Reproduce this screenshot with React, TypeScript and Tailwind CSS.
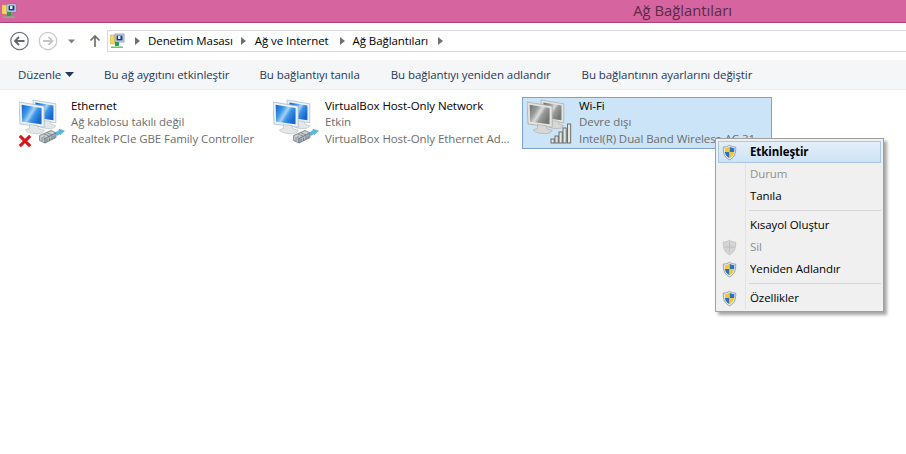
import React from 'react';

const font = { fontFamily: '"Open Sans", "Noto Sans", sans-serif' };

function FolderIcon({ size = 16 }: { size?: number }) {
  return (
    <svg width={size} height={size} viewBox="0 0 16 16" className="shrink-0">
      <path d="M0 2h5l1 1h3v8H0z" fill="#f4d662" stroke="#c9a83c" strokeWidth="0.5" />
      <rect x="5" y="1" width="9" height="8" fill="#dbe6f2" stroke="#6d7f93" strokeWidth="0.7" />
      <rect x="6.5" y="2.5" width="6" height="5" fill="#10388f" />
      <rect x="8" y="3" width="2.5" height="3" fill="#dfeaf8" />
      <rect x="5" y="9" width="4" height="4" fill="#2d9e4f" />
      <rect x="1" y="13.5" width="12" height="1.5" fill="#5fc77a" />
    </svg>
  );
}

function Monitor({ gray, x, y, scale = 1 }: { gray?: boolean; x: number; y: number; scale?: number }) {
  const id = gray ? 'screen-gray' : 'screen-blue';
  return (
    <g transform={`translate(${x} ${y}) scale(${scale})`}>
      <path d="M0 0l24 4v20L1 21z" fill={gray ? '#e4e4e2' : '#eef3f8'} stroke={gray ? '#a3a5a2' : '#9db4cc'} strokeWidth="0.7" />
      <path d="M2.500 2.500l19 3.200v15.500L3 18.800z" fill={`url(#${id})`} />
      <path d="M10 21.500l8 1 1 3 5 1.500c-1 2.500-4 3.500-9 3-5-.3-8-1.500-9-3.500l4-1.500z" fill={gray ? '#d7d7d4' : '#e4e7e8'} stroke={gray ? '#a9aaa7' : '#b5babd'} strokeWidth="0.6" />
    </g>
  );
}

function Computers({ gray }: { gray?: boolean }) {
  return (
    <svg width="38" height="36" viewBox="0 0 38 36" className="absolute left-0 top-0">
      <defs>
        <linearGradient id="screen-blue" x1="0" y1="0" x2="1" y2="0.6">
          <stop offset="0" stopColor="#0f5fc4" />
          <stop offset="0.35" stopColor="#3f97e8" />
          <stop offset="0.55" stopColor="#a4d3f6" />
          <stop offset="0.7" stopColor="#3e94e6" />
          <stop offset="1" stopColor="#1668cc" />
        </linearGradient>
        <linearGradient id="screen-gray" x1="0" y1="0" x2="1" y2="0.6">
          <stop offset="0" stopColor="#6f716e" />
          <stop offset="0.35" stopColor="#9a9c99" />
          <stop offset="0.55" stopColor="#dcdcda" />
          <stop offset="0.7" stopColor="#999b98" />
          <stop offset="1" stopColor="#757774" />
        </linearGradient>
      </defs>
      <Monitor gray={gray} x={14} y={1} scale={0.95} />
      <Monitor gray={gray} x={0} y={3} scale={1.05} />
    </svg>
  );
}

function Plug() {
  return (
    <svg width="26" height="15" viewBox="0 0 26 15" className="absolute left-[20px] top-[30px]">
      <path d="M.6 6.500L12 1.500l5 2.500L6 9.500v4.500L.6 11.500z" fill="#cdd3d7" stroke="#66747c" strokeWidth="0.8" />
      <path d="M6 9.500v4.500L17 8.500V4z" fill="#aeb7bd" stroke="#66747c" strokeWidth="0.8" />
      <path d="M3 8l0 4M5 6.700l0 4M8 10l0 3M10.500 9l0 3M13 7.500l0 3M15 6.500l0 3M5 5l5 2M8 3.800l5 2" stroke="#5f6c74" strokeWidth="0.7" />
      <path d="M16 4l4-2.500V0l5.500 2L21 6V4.500l-3 2z" fill="#5cb6df" stroke="#3b91b9" strokeWidth="0.4" />
    </svg>
  );
}

function RedX() {
  return (
    <svg width="14" height="14" viewBox="0 0 14 14" className="absolute left-[-1px] top-[35px]">
      <path d="M1.800 1.800l10.400 10.400M12.200 1.800L1.800 12.200" stroke="#d5161c" strokeWidth="3.100" />
    </svg>
  );
}

function Signal() {
  return (
    <svg width="25" height="22" viewBox="0 0 25 22" className="absolute left-[23px] top-[24px]">
      {[
        [1, 16, 4],
        [5, 13, 7],
        [9, 9, 11],
        [13, 5, 15],
        [17.500, 1, 19],
      ].map(([x, y, h]) => (
        <rect key={x} x={x} y={y} width="3.200" height={h} fill="#e4e6e2" stroke="#5f635c" strokeWidth="0.9" />
      ))}
    </svg>
  );
}

function Shield({ gray }: { gray?: boolean }) {
  return (
    <svg width="15" height="17" viewBox="0 0 16 17">
      <path d="M8 .7c2 1.400 4 2 6.600 2 .3 6.500-1.300 11.200-6.600 13.600C2.700 13.900 1.100 9.200 1.400 2.700 4 2.700 6 2.100 8 .700z" fill={gray ? '#d4d4d4' : '#e9eef3'} stroke={gray ? '#bcbcbc' : '#7a8a9c'} strokeWidth="0.8" />
      {gray ? (
        <path d="M8 3v11M3 8h10" stroke="#bdbdbd" strokeWidth="1" />
      ) : (
        <>
          <path d="M8 2.400c1.700 1 3.300 1.500 5.200 1.600L13 8H8z" fill="#2d6fc4" />
          <path d="M8 2.400C6.300 3.400 4.700 3.900 2.800 4L3 8h5z" fill="#f4c92f" />
          <path d="M3 8h5v6.700C5 13.200 3.500 11 3 8z" fill="#2d6fc4" />
          <path d="M13 8H8v6.700c3-1.500 4.500-3.700 5-6.700z" fill="#f4c92f" />
        </>
      )}
    </svg>
  );
}

function Adapter({
  name,
  status,
  device,
  selected,
  className,
  children,
}: {
  name: string;
  status: string;
  device: string;
  selected?: boolean;
  className: string;
  children: React.ReactNode;
}) {
  return (
    <div
      className={`flex h-[52px] shrink-0 items-start border pl-[4px] pt-[1px] ${className} ${
        selected ? 'border-[#7da2ce] bg-[#cce4f8]' : 'border-transparent'
      }`}
    >
      <div className="relative h-[50px] w-[52px] shrink-0">{children}</div>
      <div className="-mt-px whitespace-nowrap text-[11.5px] leading-[16px] tracking-[-0.08px]">
        <div className="text-black">{name}</div>
        <div className="text-[#6d6d6d]">{status}</div>
        <div className="mt-px text-[#6d6d6d]">{device}</div>
      </div>
    </div>
  );
}

function MenuItem({ label, shield, disabled, bold }: { label: string; shield?: 'color' | 'gray'; disabled?: boolean; bold?: boolean }) {
  return (
    <div
      className={`flex h-[22px] items-center border ${
        bold ? 'border-[#a8c8e6] bg-gradient-to-b from-[#e3eff9] to-[#cfe3f5]' : 'border-transparent'
      }`}
    >
      <div className="flex w-[21px] shrink-0 justify-center">{shield && <Shield gray={shield === 'gray'} />}</div>
      <span
        className={`pl-[10px] text-[11.5px] tracking-[-0.08px] ${
          bold ? 'font-bold text-black' : disabled ? 'text-[#8f8f8f]' : 'text-black'
        }`}
      >
        {label}
      </span>
    </div>
  );
}

function Arrow({ className }: { className: string }) {
  return (
    <svg width="5" height="8" viewBox="0 0 5 8" className={`shrink-0 ${className}`}>
      <path d="M0 0l5 4-5 4z" fill="#707070" />
    </svg>
  );
}

export default function App() {
  return (
    <div className="relative h-[454px] w-[906px] overflow-hidden bg-white" style={font}>
      {/* Title bar */}
      <div className="relative flex h-[23px] items-center justify-end border-b border-[#a8447c] bg-[#d6649f] pb-[2px]">
        <div className="absolute left-[2px] top-[3px]">
          <FolderIcon />
        </div>
        <span className="mr-[174px] text-[14.8px] text-[#5b2a45]">Ağ Bağlantıları</span>
      </div>

      {/* Navigation row */}
      <div className="flex h-[37px] items-start pl-[10px] pt-[8px]">
        <svg width="72" height="20" viewBox="0 0 72 20" className="mr-[7px] shrink-0" fill="none">
          <circle cx="9.500" cy="10" r="8.700" stroke="#6e7378" strokeWidth="1.200" />
          <path d="M14.500 10h-9M9 6l-4 4 4 4" stroke="#60656a" strokeWidth="1.800" />
          <circle cx="38" cy="10" r="8.700" stroke="#c6c8ca" strokeWidth="1.200" />
          <path d="M33 10h9M38.500 6l4 4-4 4" stroke="#c3c5c7" strokeWidth="1.800" />
          <path d="M58 8.500h7L61.500 12.500z" fill="#7d8184" />
        </svg>
        <svg width="12" height="14" viewBox="0 0 12 14" className="mr-[7px] mt-[3px] shrink-0" fill="none">
          <path d="M6 13V2M1.500 6.500L6 2l4.500 4.500" stroke="#6c7074" strokeWidth="1.700" />
        </svg>
        <div className="-ml-px -mt-px flex h-[22px] flex-1 items-center border border-r-0 border-[#d9d9d9] pl-[2px] text-[11.5px] tracking-[-0.08px] text-black">
          <FolderIcon />
          <Arrow className="ml-[9px]" />
          <span className="ml-[8px]">Denetim Masası</span>
          <Arrow className="ml-[8px]" />
          <span className="ml-[9px]">Ağ ve Internet</span>
          <Arrow className="ml-[11px]" />
          <span className="ml-[8px]">Ağ Bağlantıları</span>
          <Arrow className="ml-[10px]" />
        </div>
      </div>

      {/* Command bar */}
      <div className="flex h-[30px] items-center border-b border-[#eaecef] bg-[#f5f6f7] pl-[18px] text-[11.5px] tracking-[-0.08px] text-[#1e395b]">
        <span>Düzenle</span>
        <svg width="9" height="5" viewBox="0 0 9 5" className="ml-[4px] mr-[30px]">
          <path d="M0 0h9L4.500 5z" fill="#1e395b" />
        </svg>
        <span className="mr-[30px]">Bu ağ aygıtını etkinleştir</span>
        <span className="mr-[31px]">Bu bağlantıyı tanıla</span>
        <span className="mr-[31px]">Bu bağlantıyı yeniden adlandır</span>
        <span>Bu bağlantının ayarlarını değiştir</span>
      </div>

      {/* Adapters */}
      <div className="flex pl-[14px] pt-[7px]">
        <Adapter name="Ethernet" status="Ağ kablosu takılı değil" device="Realtek PCIe GBE Family Controller" className="w-[254px]">
          <Computers />
          <Plug />
          <RedX />
        </Adapter>
        <Adapter name="VirtualBox Host-Only Network" status="Etkin" device="VirtualBox Host-Only Ethernet Ad..." className="w-[254px]">
          <Computers />
          <Plug />
        </Adapter>
        <Adapter name="Wi-Fi" status="Devre dışı" device="Intel(R) Dual Band Wireless-AC 31" selected className="w-[250px]">
          <Computers gray />
          <Signal />
        </Adapter>
      </div>

      {/* Context menu */}
      <div className="absolute left-[715px] top-[138px] h-[174px] w-[169px] border border-[#a0a0a0] bg-[#f0f0f0] px-[2px] pt-[2px] shadow-[3px_3px_3px_rgba(0,0,0,0.35)]">
        <div className="absolute bottom-[2px] left-[29px] top-[2px] w-px bg-[#e2e3e3]" />
        <div className="relative">
          <MenuItem label="Etkinleştir" shield="color" bold />
          <MenuItem label="Durum" disabled />
          <MenuItem label="Tanıla" />
          <div className="my-[3px] ml-[31px] h-px bg-[#d7d7d7]" />
          <MenuItem label="Kısayol Oluştur" />
          <MenuItem label="Sil" shield="gray" disabled />
          <MenuItem label="Yeniden Adlandır" shield="color" />
          <div className="my-[3px] ml-[31px] h-px bg-[#d7d7d7]" />
          <MenuItem label="Özellikler" shield="color" />
        </div>
      </div>
    </div>
  );
}
